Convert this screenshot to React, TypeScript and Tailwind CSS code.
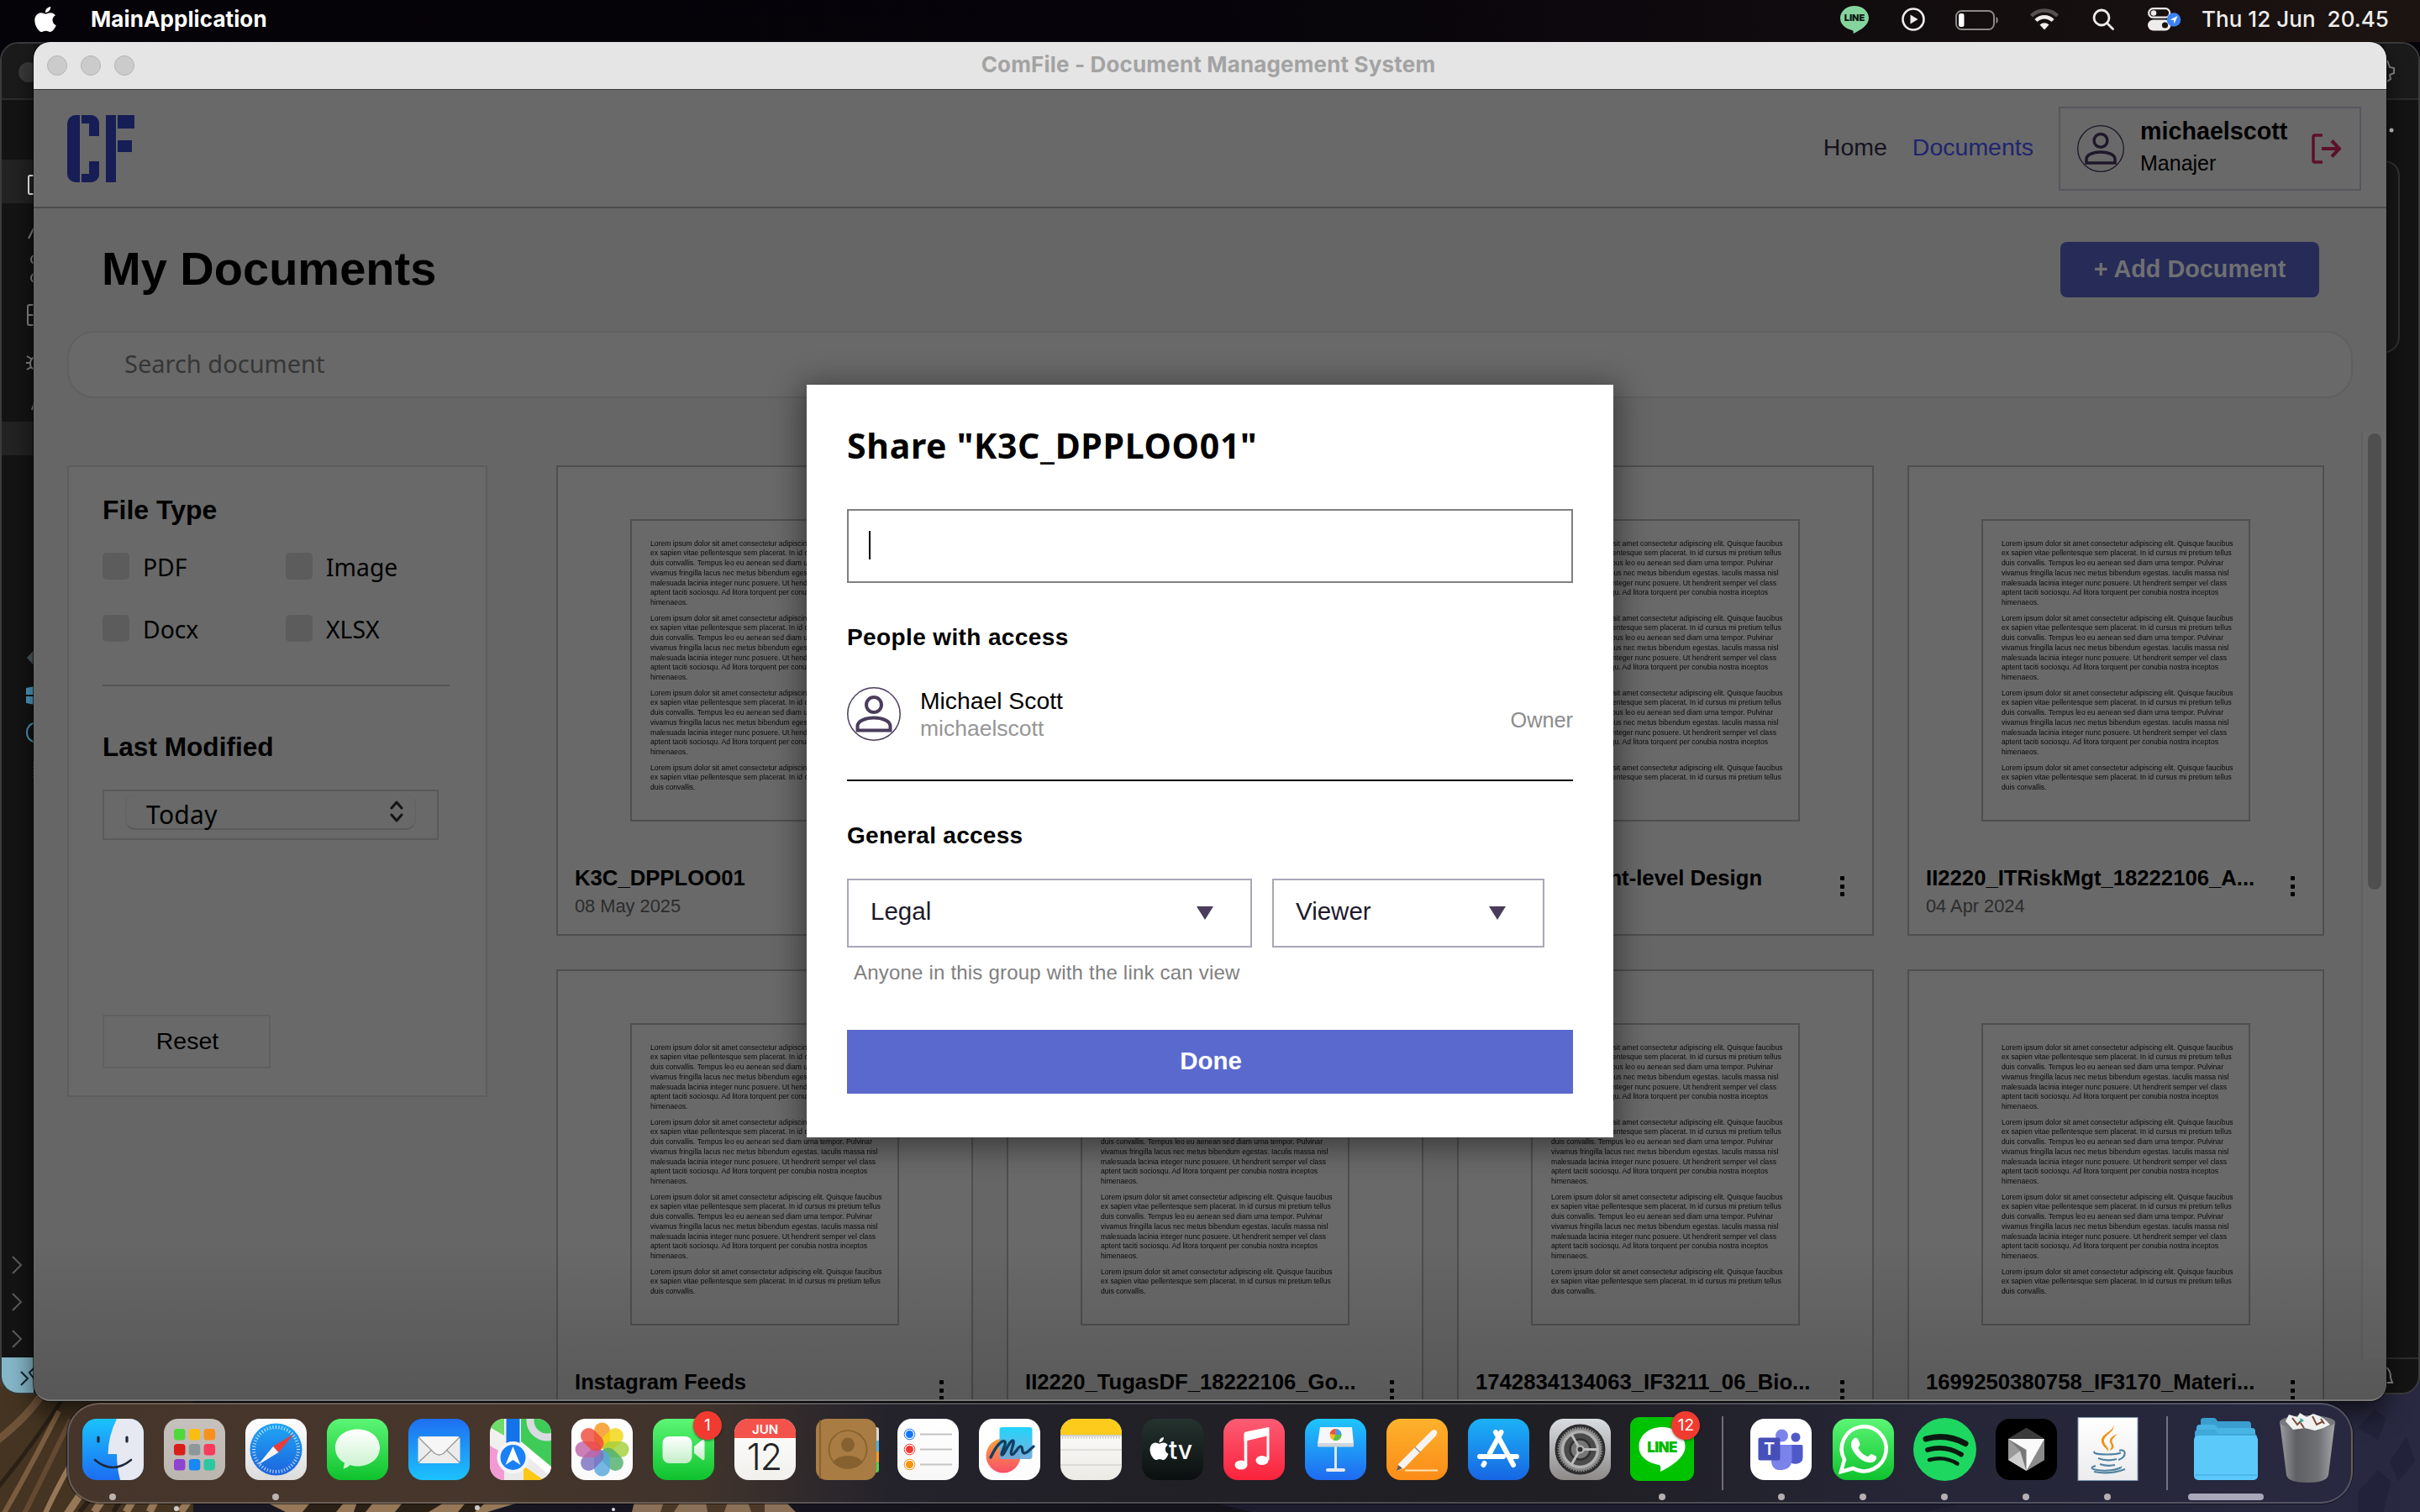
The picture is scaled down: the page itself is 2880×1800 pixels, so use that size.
import React from "react";

const LOREM = [
  "Lorem ipsum dolor sit amet consectetur adipiscing elit. Quisque faucibus",
  "ex sapien vitae pellentesque sem placerat. In id cursus mi pretium tellus",
  "duis convallis. Tempus leo eu aenean sed diam urna tempor. Pulvinar",
  "vivamus fringilla lacus nec metus bibendum egestas. Iaculis massa nisl",
  "malesuada lacinia integer nunc posuere. Ut hendrerit semper vel class",
  "aptent taciti sociosqu. Ad litora torquent per conubia nostra inceptos",
  "himenaeos.",
];
const LOREM_END = [LOREM[0], LOREM[1], "duis convallis."];

const DOCS = [
  { title: "K3C_DPPLOO01", date: "08 May 2025" },
  { title: "", date: "" },
  { title: "K3 Component-level Design", date: "" },
  { title: "II2220_ITRiskMgt_18222106_A...", date: "04 Apr 2024" },
  { title: "Instagram Feeds", date: "" },
  { title: "II2220_TugasDF_18222106_Go...", date: "" },
  { title: "1742834134063_IF3211_06_Bio...", date: "" },
  { title: "1699250380758_IF3170_Materi...", date: "" },
];

function Apple({ className, fill = "#fff" }: { className?: string; fill?: string }) {
  return (
    <svg viewBox="2 0 20 24" className={className} fill={fill} preserveAspectRatio="none">
      <path d="M12.15 6.9c-.95 0-2.42-1.08-3.96-1.04-2.04.03-3.91 1.18-4.96 3.01-2.12 3.68-.55 9.1 1.52 12.09 1.01 1.45 2.21 3.09 3.79 3.04 1.52-.07 2.09-.99 3.94-.99 1.83 0 2.35.99 3.96.95 1.64-.03 2.68-1.48 3.68-2.95 1.16-1.69 1.64-3.33 1.66-3.42-.04-.01-3.18-1.22-3.22-4.86-.03-3.04 2.48-4.49 2.6-4.56-1.43-2.09-3.62-2.32-4.39-2.38-2-.16-3.68 1.09-4.61 1.09zM15.53 3.83c.84-1.01 1.4-2.43 1.25-3.83-1.21.05-2.66.8-3.53 1.82-.78.9-1.45 2.34-1.27 3.71 1.34.1 2.71-.69 3.56-1.7" />
    </svg>
  );
}

function Avatar({ className, color }: { className: string; color: string }) {
  return (
    <svg viewBox="0 0 64 64" className={className} fill="none" stroke={color}>
      <circle cx="32" cy="32" r="31.2" strokeWidth="1.5" />
      <circle cx="32" cy="21" r="9" strokeWidth="4" />
      <path d="M12.500 51.500v-5c0-6.500 10-10 19.500-10s19.500 3.500 19.500 10v5z" strokeWidth="4" />
    </svg>
  );
}

function MenuBar() {
  return (
    <div className="flex h-[50px] w-full items-center bg-gradient-to-r from-[#050208] via-[#06040a] to-[#1c1411] font-['Inter'] text-[26px] leading-[50px]">
      <Apple className="-mt-[4px] ml-[41px] h-[30px] w-[26px]" />
      <span className="-mt-[4px] ml-[41px] font-bold tracking-[0.1px] text-white">MainApplication</span>
      <div className="-mt-[4px] ml-auto flex items-center">
        <svg viewBox="0 0 34 34" className="h-[34px] w-[34px]">
          <path d="M17 1C8 1 0 7 0 15.500 0 23 6 28 14 30c2 .6 2 2 1.500 4C24 30 34 24 34 15.500 34 7 26 1 17 1z" fill="#86d49d" />
          <text x="17" y="19" textAnchor="middle" fontSize="11" fontWeight="900" fontFamily="Inter" fill="#0d1a12">LINE</text>
        </svg>
        <svg viewBox="0 0 28 28" className="ml-[39px] h-[28px] w-[28px]">
          <circle cx="14" cy="14" r="12.500" fill="none" stroke="#efedec" strokeWidth="2.600" />
          <path d="M10.500 8.500v11l9-5.500z" fill="#efedec" />
        </svg>
        <svg viewBox="0 0 52 24" className="ml-[36px] mt-[2px] h-[24px] w-[52px]">
          <rect x="1" y="1" width="45" height="22" rx="6.500" fill="none" stroke="#8d8886" strokeWidth="2" />
          <rect x="4" y="4" width="6.500" height="16" rx="2.500" fill="#fff" />
          <path d="M48.500 8v8c3-1 3-7 0-8z" fill="#8d8886" />
        </svg>
        <svg viewBox="0 0 34 26" className="ml-[37px] h-[26px] w-[34px]">
          <path d="M1.500 9a22 22 0 0 1 31 0" fill="none" stroke="#57504e" strokeWidth="4.500" />
          <path d="M7 14.500a14 14 0 0 1 20 0" fill="none" stroke="#efedec" strokeWidth="4.500" />
          <path d="M17 25.500l-5.500-6a8 8 0 0 1 11 0z" fill="#efedec" />
        </svg>
        <svg viewBox="0 0 26 26" className="ml-[40px] h-[26px] w-[26px]" fill="none" stroke="#efedec" strokeWidth="2.800" strokeLinecap="round">
          <circle cx="11" cy="11" r="9" />
          <path d="M17.500 17.500l7 7" />
        </svg>
        <svg viewBox="0 0 40 28" className="ml-[40px] h-[28px] w-[40px]">
          <rect x="1.200" y="1.200" width="25" height="10.500" rx="5.250" fill="none" stroke="#efedec" strokeWidth="2.200" />
          <circle cx="7" cy="6.500" r="3.300" fill="#efedec" />
          <rect x="0" y="14.500" width="27.500" height="13" rx="6.500" fill="#efedec" />
          <circle cx="20.500" cy="21" r="3.600" fill="#171110" />
          <circle cx="31" cy="14.500" r="8.300" fill="#3a82f7" />
          <path d="M35.500 10l-9 4.500 4.500.5.500 4.500z" fill="#fff" />
        </svg>
        <span className="ml-[24px] mr-[37px] whitespace-pre font-medium tracking-[0.05px] text-[#efedec]">Thu 12 Jun  20.45</span>
      </div>
    </div>
  );
}

/* Stencil monogram */
function Logo() {
  return (
    <div className="flex h-[80px] w-[80px]">
      <div className="h-full w-[15px] rounded-l-[10px] bg-[#171e55]" />
      <div className="ml-[2px] flex h-full w-[21px] flex-col justify-between">
        <div className="h-[25px] rounded-tr-[10px] border-r-[12px] border-t-[10px] border-[#171e55]" />
        <div className="h-[25px] rounded-br-[10px] border-b-[10px] border-r-[12px] border-[#171e55]" />
      </div>
      <div className="ml-[8px] h-full w-[12px] bg-[#171e55]" />
      <div className="ml-[2px] flex flex-col">
        <div className="h-[16px] w-[20px] bg-[#171e55]" />
        <div className="mt-[14px] h-[14px] w-[17px] bg-[#171e55]" />
      </div>
    </div>
  );
}

function Header() {
  return (
    <div className="flex h-[141px] items-center border-b-2 border-[#4b4b4b] bg-[#696969] pl-[40px] pr-[30px]">
      <Logo />
      <div className="ml-auto flex gap-[30px] pb-[4px] text-[28.500px] leading-[32px]">
        <span className="text-[#16131f]">Home</span>
        <span className="text-[#1f2570]">Documents</span>
      </div>
      <div className="ml-[30px] flex h-[100px] w-[360px] items-center border-2 border-[#56565f] pl-[20px] pr-[22px]">
        <Avatar className="h-[56px] w-[56px]" color="#1f1829" />
        <div className="ml-[19px] flex h-full flex-col pt-[11px] text-black">
          <span className="text-[28.700px] font-bold leading-[32px]">michaelscott</span>
          <span className="mt-[8px] text-[25px] leading-[28px]">Manajer</span>
        </div>
        <svg viewBox="0 0 35 36" className="ml-auto h-[36px] w-[35px]" fill="none" stroke="#5c1029" strokeWidth="4">
          <path d="M13 2H4q-2 0-2 2v28q0 2 2 2h9" strokeWidth="3.500" />
          <path d="M12 18h20M24 8.500L33 18l-9 9.500" />
        </svg>
      </div>
    </div>
  );
}

function Check({ label }: { label: string }) {
  return (
    <div className="flex h-[32px] w-[218px] items-center">
      <div className="h-[32px] w-[32px] rounded-[5px] bg-[#5c5c5c]" />
      <span className="ml-[16px] mt-[2px] font-['Noto_Sans'] text-[28.300px] leading-[32px] text-black">{label}</span>
    </div>
  );
}

function Sidebar() {
  return (
    <div className="flex h-[752px] w-[500px] shrink-0 flex-col border-2 border-[#5d5d5d] bg-[#696969] pl-[40px] text-black">
      <div className="mt-[33px] text-[32px] font-bold leading-[36px]">File Type</div>
      <div className="mt-[33px] flex flex-wrap gap-y-[42px]">
        <Check label="PDF" />
        <Check label="Image" />
        <Check label="Docx" />
        <Check label="XLSX" />
      </div>
      <div className="mt-[51px] h-[2px] w-[413px] bg-[#555]" />
      <div className="mt-[54px] text-[31.600px] font-bold leading-[36px]">Last Modified</div>
      <div className="mt-[33px] h-[60px] w-[400px] border-2 border-[#5a5a5a] pl-[25px] pt-[4px]">
        <div className="flex h-[42px] w-[346px] items-center rounded-[12px] border-x border-b-2 border-x-[#626262] border-b-[#5a5a5a] pl-[24px] pr-[14px]">
          <span className="mt-[8px] font-['Noto_Sans'] text-[30px] leading-[36px] tracking-[0.3px]">Today</span>
          <svg viewBox="0 0 16 26" className="ml-auto h-[26px] w-[16px]" fill="none" stroke="#151515" strokeWidth="3" strokeLinecap="round" strokeLinejoin="round">
            <path d="M2 9l6-7 6 7M2 17l6 7 6-7" />
          </svg>
        </div>
      </div>
      <div className="mt-[208px] h-[64px] w-[200px] border-2 border-[#606060] pl-[2px] pt-[13px] text-center text-[28.500px] leading-[32px]">Reset</div>
    </div>
  );
}

function Paragraph({ lines }: { lines: string[] }) {
  return (
    <div className="mb-[6.700px]">
      {lines.map((l) => (
        <div key={l} className="whitespace-nowrap">{l}</div>
      ))}
    </div>
  );
}

function Card({ title, date }: { title: string; date: string }) {
  return (
    <div className="h-[560px] w-[496px] border-2 border-[#4f4f4f] bg-[#696969]">
      <div className="ml-[86px] mt-[62px] h-[360px] w-[320px] overflow-hidden border-2 border-[#4f4f4f] pl-[22px] pt-[21.500px] text-[8.600px] leading-[11.770px] text-[#080808] blur-[0.4px]">
        <Paragraph lines={LOREM} />
        <Paragraph lines={LOREM} />
        <Paragraph lines={LOREM} />
        <Paragraph lines={LOREM_END} />
      </div>
      <div className="mt-[52px] flex pl-[20px] pr-[33px]">
        <div>
          <div className="h-[30px] whitespace-nowrap text-[25.700px] font-bold leading-[30px] text-black">{title}</div>
          <div className="mt-[6px] h-[26px] text-[21.800px] leading-[26px] text-[#2c2c2c]">{date}</div>
        </div>
        <div className="ml-auto mt-[13px] flex h-[24px] w-[5px] flex-col justify-between">
          <div className="h-[5px] w-[5px] rounded-[1px] bg-black" />
          <div className="h-[5px] w-[5px] rounded-[1px] bg-black" />
          <div className="h-[5px] w-[5px] rounded-[1px] bg-black" />
        </div>
      </div>
    </div>
  );
}

function Triangle() {
  return (
    <svg viewBox="0 0 20 16" className="h-[16px] w-[20px]" fill="#4a3d5c">
      <path d="M0 0h20L10 16z" />
    </svg>
  );
}

function ShareDialog() {
  return (
    <div className="absolute left-[920px] top-[408px] flex h-[896px] w-[960px] flex-col bg-white px-[48px] pt-[45px] text-black shadow-[0_6px_34px_6px_rgba(0,0,0,0.42)]">
      <div className="h-[55px] whitespace-nowrap font-['Noto_Sans'] text-[41px] font-bold leading-[54px] tracking-[0.7px]">Share "K3C_DPPLOO01"</div>
      <div className="mt-[48px] h-[88px] border-2 border-[#808080] pl-[24px] pt-[24px]">
        <div className="h-[34px] w-[2px] bg-black" />
      </div>
      <div className="mt-[49px] text-[28px] font-bold leading-[32px] tracking-[0.380px]">People with access</div>
      <div className="mt-[43px] flex h-[64px]">
        <Avatar className="h-[64px] w-[64px]" color="#4a3d5c" />
        <div className="ml-[23px] flex flex-col">
          <span className="text-[28.300px] leading-[32px]">Michael Scott</span>
          <span className="text-[26.500px] leading-[34px] text-[#969696]">michaelscott</span>
        </div>
        <span className="ml-auto mt-[22px] text-[25.300px] leading-[34px] text-[#8c8c8c]">Owner</span>
      </div>
      <div className="mt-[46px] h-[2px] bg-black" />
      <div className="mt-[49px] text-[28px] font-bold leading-[32px] tracking-[0.280px]">General access</div>
      <div className="mt-[35px] flex h-[82px] gap-[24px] text-[29.500px] text-[#1d1a2b]">
        <div className="flex w-[482px] items-center justify-between border-2 border-[#a8a7b9] pl-[26px] pr-[44px]">
          <span className="-mt-[3px]">Legal</span>
          <Triangle />
        </div>
        <div className="flex w-[324px] items-center justify-between border-2 border-[#a8a7b9] pl-[26px] pr-[44px]">
          <span className="-mt-[3px]">Viewer</span>
          <Triangle />
        </div>
      </div>
      <div className="mt-[16px] pl-[8px] text-[24px] leading-[28px] tracking-[0.200px] text-[#808080]">Anyone in this group with the link can view</div>
      <div className="mt-[54px] h-[76px] bg-[#5a69ce] pl-[2px] pt-[19px] text-center text-[29.500px] font-bold leading-[36px] text-white">Done</div>
    </div>
  );
}

function AppWindow() {
  return (
    <div className="absolute left-[40px] top-[50px] h-[1618px] w-[2800px] overflow-hidden rounded-[20px] bg-[#666] shadow-[0_0_0_1px_rgba(0,0,0,0.6),0_14px_30px_rgba(0,0,0,0.6)]">
      <div className="flex h-[57px] items-center border-b border-[#3c3c3c] bg-[#e5e5e5] pl-[16px]">
        <div className="flex gap-[16px]">
          <div className="h-[24px] w-[24px] rounded-full border border-[#b4b4b4] bg-[#cbcbcb]" />
          <div className="h-[24px] w-[24px] rounded-full border border-[#b4b4b4] bg-[#cbcbcb]" />
          <div className="h-[24px] w-[24px] rounded-full border border-[#b4b4b4] bg-[#cbcbcb]" />
        </div>
        <div className="-mt-[3px] mr-[124px] flex-1 text-center font-['Inter'] text-[26px] font-bold tracking-[0.160px] text-[#a3a3a3]">ComFile - Document Management System</div>
      </div>
      <Header />
      <div className="mt-[40px] flex h-[66px] w-full items-center justify-between pl-[81px] pr-[80px]">
        <div className="-mt-[2px] text-[56px] font-bold leading-[66px] text-black">My Documents</div>
        <div className="h-[66px] w-[308px] rounded-[8px] bg-[#262b57] text-center text-[28.800px] font-bold leading-[64px] text-[#6f7072]">+ Add Document</div>
      </div>
      <div className="mx-[40px] mt-[40px] flex h-[80px] items-center rounded-[32px] border-2 border-[#606060] bg-[#696969] pl-[66px] font-['Noto_Sans'] text-[29px] text-[#363636]">
        <span className="-mt-[2px]">Search document</span>
      </div>
      <div className="mt-[40px] flex h-[1104px]">
        <div className="ml-[40px] mt-[40px]">
          <Sidebar />
        </div>
        <div className="ml-[82px] mt-[40px] grid w-[2104px] shrink-0 grid-cols-4 content-start gap-[40px]">
          {DOCS.map((d, i) => (
            <Card key={i} title={d.title} date={d.date} />
          ))}
        </div>
        <div className="ml-auto w-[30px] border-l-2 border-[#606060] bg-[#686868] pl-[6px] pt-[2px]">
          <div className="h-[543px] w-[16px] rounded-full bg-[#4f4f4f]" />
        </div>
      </div>
      <div className="absolute inset-x-0 bottom-0 h-[190px] rounded-b-[20px] border-b-2 border-[#777] bg-gradient-to-t from-black/15 to-transparent" />
      <ShareDialog />
    </div>
  );
}

/* Code editor that shows at both sides of the main window */
function EditorWindow() {
  return (
    <div className="absolute left-0 top-[50px] flex h-[1610px] w-[2880px] justify-between overflow-hidden rounded-[22px] border-2 border-[#3b3b3b] bg-[#141414]">
      <svg viewBox="0 50 40 1610" className="-ml-[2px] -mt-[2px] h-[1610px] w-[40px]" fill="none" stroke="#8a8a8a" strokeWidth="2">
        <rect x="2" y="50" width="40" height="68" fill="#1b1b1b" stroke="none" />
        <path d="M2 118h40" stroke="#2e2e2e" />
        <circle cx="34" cy="86" r="12" fill="#3a3a3a" stroke="none" />
        <rect x="2" y="190" width="40" height="52" fill="#232323" stroke="none" />
        <rect x="34" y="209" width="20" height="22" rx="2" stroke="#fff" />
        <path d="M34 284l7-14" />
        <circle cx="42" cy="309" r="5" />
        <circle cx="42" cy="331" r="5" />
        <path d="M42 363h-7q-2 0-2 2v20q0 2 2 2h7M33 375h8" />
        <path d="M32 424l5 3M31 432h6M32 440l5-3M41 425q-5 2-5 8t5 6" />
        <path d="M38 488l3-9" />
        <rect x="2" y="502" width="40" height="40" fill="#232323" stroke="none" />
        <path d="M42 772l-10 11 10 11z" fill="#4f5a60" stroke="none" />
        <path d="M31 819l11-2v10H31zM31 829h11v10l-11-2z" fill="#4f9fc4" stroke="none" />
        <path d="M42 860q-10 3-10 12t10 12" stroke="#4f9fc4" />
        <path d="M40 908v18" strokeDasharray="2 2" stroke="#666" />
        <path d="M15 1496l10 10-10 10M15 1540l10 10-10 10M15 1584l10 10-10 10" stroke="#5e5e5e" />
        <path d="M2 1616h40v44H2z" fill="#86b7c9" stroke="none" />
        <path d="M25 1633l8 8-8 8M42 1627l-7 7 6 8" stroke="#10242c" />
      </svg>
      <svg viewBox="2838 50 40 1610" className="-mt-[2px] h-[1610px] w-[40px]" fill="none" stroke="#8a8a8a" strokeWidth="2">
        <rect x="2838" y="50" width="40" height="68" fill="#1b1b1b" stroke="none" />
        <path d="M2838 118h40M2838 1617h40" stroke="#2e2e2e" />
        <path d="M2841 72l3 8 5 1v6l-5 2 1 5-4 3" />
        <circle cx="2846" cy="155" r="2.500" fill="#ccc" stroke="none" />
        <path d="M2838 192q17 2 17 18v190q0 16-17 20" stroke="#333" fill="#181818" />
        <path d="M2840 1628q5 3 5 12l2 6h-7" />
      </svg>
    </div>
  );
}

function Wallpaper() {
  return (
    <svg viewBox="0 0 2880 1800" className="absolute inset-0 h-[1800px] w-[2880px]">
      <rect width="2880" height="1800" fill="#05040a" />
      <defs>
        <linearGradient id="night" x1="0" x2="1">
          <stop offset="0" stopColor="#1a1824" />
          <stop offset=".5" stopColor="#14131b" />
          <stop offset="1" stopColor="#292a42" />
        </linearGradient>
      </defs>
      <rect y="1600" width="2880" height="200" fill="url(#night)" />
      <path d="M0 1640h130l-40 160H0z" fill="#4e3b27" />
      <path d="M0 1650h230v150H0z" fill="#453421" />
      <g fill="none" strokeLinecap="butt">
        <path d="M-10 1720Q30 1690 50 1660" stroke="#6f5439" strokeWidth="9" />
        <path d="M-10 1780Q40 1720 78 1660" stroke="#2b2016" strokeWidth="5" />
        <path d="M0 1810Q40 1740 70 1680" stroke="#7a5d40" strokeWidth="6" />
        <path d="M25 1810Q55 1750 84 1690" stroke="#634a31" strokeWidth="6" />
        <path d="M50 1810Q68 1770 86 1740" stroke="#967858" strokeWidth="6" />
        <path d="M75 1810l20-30M112 1800l14-20M150 1800l12-20M178 1800l10-20M215 1800l14-20" stroke="#967858" strokeWidth="9" />
        <path d="M95 1800l16-20M135 1800l12-20" stroke="#2b2016" strokeWidth="6" />
      </g>
      <path d="M316 1788h304l-40 12H340z" fill="#967858" />
      <path d="M370 1788h40l-10 12h-40zM425 1788h20l-10 12h-14zM480 1788h50l-20 12h-40zM555 1788h24l-14 12h-20z" fill="#2b2016" />
      <path d="M755 1788h180l12 12H752z" fill="#8a7056" />
      <path d="M790 1788h20l-8 12h-16zM840 1788h26l-4 12h-20zM890 1788h20v12h-16z" fill="#4c3826" />
      <path d="M1440 1788h900l-50 12h-800z" fill="#1c1c2e" />
      <path d="M2806 1700l20-22 14 10-10 26zM2844 1740l20-30 10 30-20 24zM2806 1776l24-26 16 14-10 36h-30z" fill="#22223a" />
      <circle cx="210" cy="1796" r="3" fill="#ccc" />
      <circle cx="730" cy="1797" r="2" fill="#ddd" />
      <circle cx="568" cy="1795" r="3" fill="#ccc" />
    </svg>
  );
}

function Grad({ id, a, b }: { id: string; a: string; b: string }) {
  return (
    <defs>
      <linearGradient id={id} x1="0" y1="0" x2="0" y2="1">
        <stop offset="0" stopColor={a} />
        <stop offset="1" stopColor={b} />
      </linearGradient>
    </defs>
  );
}

function Tile({ id, a, b, children }: { id: string; a: string; b: string; children?: React.ReactNode }) {
  return (
    <svg viewBox="0 0 73 73" className="h-[73px] w-[73px] overflow-visible">
      <Grad id={id} a={a} b={b} />
      <clipPath id={id + "-clip"}>
        <rect width="73" height="73" rx="17" />
      </clipPath>
      <rect width="73" height="73" rx="17" fill={`url(#${id})`} />
      <g clipPath={`url(#${id}-clip)`}>{children}</g>
    </svg>
  );
}

const PETALS = ["#f7941d", "#f2d50f", "#a5cf3a", "#4fb06d", "#58a6dc", "#7a6fc0", "#c065a8", "#ef4b3c"];
const TICKS = Array.from({ length: 48 }, (_, i) => i * 7.5);
const PAD = ["#4fd93c", "#fbbd12", "#f7911b", "#d81f1a", "#8e979c", "#fb3b5c", "#8f43cf", "#1689f5", "#2cc7a0"];

const ICONS: { name: string; dot?: boolean; badge?: string; art: React.ReactNode }[] = [
  {
    name: "finder",
    dot: true,
    art: (
      <Tile id="fi" a="#1ac3fd" b="#1d6df2">
        <path d="M41 0Q31 20 30.500 42H41q0 16 4 31h28V0z" fill="#e6e9f1" />
        <path d="M19 22v5M53 22v5" stroke="#1d2a3c" strokeWidth="3.200" strokeLinecap="round" />
        <path d="M15 49q21 18 43 0" fill="none" stroke="#1d2a3c" strokeWidth="2.600" strokeLinecap="round" />
      </Tile>
    ),
  },
  {
    name: "launchpad",
    art: (
      <Tile id="lp" a="#c6c1bd" b="#bcb6b1">
        {PAD.map((c, i) => (
          <rect key={i} x={12 + (i % 3) * 17.8} y={12 + Math.floor(i / 3) * 18} width="13.500" height="13.500" rx="3.500" fill={c} />
        ))}
      </Tile>
    ),
  },
  {
    name: "safari",
    dot: true,
    art: (
      <Tile id="sa" a="#ffffff" b="#dcdcdc">
        <Grad id="sab" a="#1fa7f5" b="#1d63dd" />
        <circle cx="36.500" cy="36.500" r="31" fill="url(#sab)" />
        {TICKS.map((t) => (
          <path key={t} d="M36.500 8v4" stroke="#fff" strokeOpacity=".8" strokeWidth="1" transform={`rotate(${t} 36.500 36.500)`} />
        ))}
        <path d="M58 18L33 33l6.500 7z" fill="#ee3b35" />
        <path d="M15 55l18-22 6.500 7z" fill="#f4f4f4" />
      </Tile>
    ),
  },
  {
    name: "messages",
    art: (
      <Tile id="me" a="#5bf675" b="#0fc22d">
        <Grad id="meb" a="#ffffff" b="#c9f3cd" />
        <path d="M36.500 12.500C21 12.500 10 22 10 34.500c0 8 4 14 11 18-.5 3-1 5-1.500 7 4-1 6-2.500 8-4.500 3 1 6 1.500 9 1.500C52 56.500 63 47 63 34.500S52 12.500 36.500 12.500z" fill="url(#meb)" />
      </Tile>
    ),
  },
  {
    name: "mail",
    art: (
      <Tile id="ma" a="#1e6ff1" b="#1cc2fd">
        <rect x="11.500" y="21" width="50" height="32" rx="3.500" fill="#ececec" />
        <path d="M12 52l18-17M61 52L43 35" stroke="#9a9a9a" strokeWidth="1.400" />
        <path d="M12 22l19 19q5.500 4 11 0l19-19" fill="#f6f6f6" stroke="#9a9a9a" strokeWidth="1.400" />
      </Tile>
    ),
  },
  {
    name: "maps",
    art: (
      <Tile id="mp" a="#f3f4f2" b="#e9e9e9">
        <path d="M0 0h17v20L0 10z" fill="#6fdb68" />
        <path d="M37 0h36v58L37 30z" fill="#3fcb58" />
        <circle cx="68" cy="2" r="20" fill="none" stroke="#d9dbe0" strokeWidth="9" />
        <path d="M0 32l17 10v31H0z" fill="#f39ad4" />
        <path d="M40 56l24 17H40z" fill="#fdc813" />
        <path d="M37 27l36 30v12L37 38z" fill="#fff" />
        <rect x="19.500" width="16" height="46" fill="#1373ea" />
        <circle cx="27.500" cy="46" r="17" fill="#1b80f5" stroke="#f4f6fa" strokeWidth="4" />
        <path d="M27.500 33l9 22-9-6-9 6z" fill="#fff" />
      </Tile>
    ),
  },
  {
    name: "photos",
    art: (
      <Tile id="ph" a="#ffffff" b="#fafafa">
        {PETALS.map((c, i) => (
          <rect key={c} x="27" y="4.500" width="19" height="31" rx="9.500" fill={c} fillOpacity=".82" transform={`rotate(${i * 45} 36.500 36.500)`} />
        ))}
      </Tile>
    ),
  },
  {
    name: "facetime",
    badge: "1",
    art: (
      <Tile id="fa" a="#5bf675" b="#0fc22d">
        <Grad id="fab" a="#ffffff" b="#c2eec6" />
        <rect x="11.500" y="21" width="35" height="32" rx="8" fill="url(#fab)" />
        <path d="M49 33l10-8q2.500-1 2.500 2v20q0 3-2.500 2l-10-8z" fill="url(#fab)" />
      </Tile>
    ),
  },
  {
    name: "calendar",
    art: (
      <Tile id="ca" a="#ffffff" b="#f1f0ec">
        <rect width="73" height="23" fill="#f4534b" />
        <text x="36.500" y="17.500" textAnchor="middle" fontSize="15" fontWeight="600" fontFamily="Inter" fill="#fff">JUN</text>
        <text x="35.500" y="61" textAnchor="middle" fontSize="43" fontWeight="300" fontFamily="Inter" letterSpacing="-1" fill="#222">12</text>
      </Tile>
    ),
  },
  {
    name: "contacts",
    art: (
      <svg viewBox="0 0 76 73" className="ml-[4px] h-[73px] w-[76px]">
        <rect x="64" y="10" width="11" height="18" rx="3" fill="#d8d8d4" />
        <rect x="64" y="26" width="11" height="14" fill="#4fb3e8" />
        <rect x="64" y="39" width="11" height="13" fill="#f59a23" />
        <rect x="64" y="51" width="11" height="13" rx="3" fill="#55cf5c" />
        <rect width="72" height="73" rx="13" fill="#a97c43" />
        <path d="M5 2v69" stroke="#8a6230" strokeWidth="2" />
        <circle cx="38" cy="36.500" r="22.500" fill="none" stroke="#86612f" strokeWidth="1.600" />
        <ellipse cx="38" cy="31" rx="8" ry="8.500" fill="#86612f" />
        <path d="M20 52q5-8 18-8t18 8q-8 7.500-18 7.500t-18-7.500z" fill="#86612f" />
      </svg>
    ),
  },
  {
    name: "reminders",
    art: (
      <Tile id="re" a="#ffffff" b="#f7f7f7">
        {["#1677f6", "#ef3a32", "#f39413"].map((c, i) => (
          <g key={c}>
            <circle cx="14.500" cy={18.500 + i * 18} r="4.500" fill={c} />
            <circle cx="14.500" cy={18.500 + i * 18} r="6.300" fill="none" stroke={c} strokeWidth="1" />
            <path d={`M27 ${18.5 + i * 18}h38`} stroke="#c3c3c3" strokeWidth="1.800" />
          </g>
        ))}
      </Tile>
    ),
  },
  {
    name: "freeform",
    art: (
      <Tile id="fr" a="#ffffff" b="#fdfdfd">
        <Grad id="frb" a="#fba33a" b="#f84f69" />
        <circle cx="29" cy="44" r="20.500" fill="url(#frb)" />
        <Grad id="frc" a="#12d0fb" b="#6fa9dc" />
        <rect x="24.500" y="10" width="39" height="38" rx="3" fill="url(#frc)" fillOpacity=".93" />
        <path d="M14 46C20 33 27 25 30.500 27S25 42 27.500 43 36 26 40 26s-4 15-1 16.500S47 32 50 33s0 8 4 8 7-5 11-8" fill="none" stroke="#123e63" strokeWidth="3.400" strokeLinecap="round" />
      </Tile>
    ),
  },
  {
    name: "notes",
    art: (
      <Tile id="no" a="#ffffff" b="#eceae5">
        <rect width="73" height="19" fill="#fdcb1b" />
        <path d="M0 20h73" stroke="#a9a59b" strokeWidth="1" />
        <path d="M2 22.500h70" stroke="#b9b6ae" strokeWidth="2" strokeDasharray="1.200 2" />
        <path d="M0 37h73M0 55h73" stroke="#c9c7c1" strokeWidth="1.200" />
      </Tile>
    ),
  },
  {
    name: "tv",
    art: (
      <svg viewBox="0 0 73 73" className="h-[73px] w-[73px]">
        <Grad id="tv" a="#25332f" b="#0a0f0f" />
        <rect width="73" height="73" rx="17" fill="url(#tv)" />
        <svg x="9" y="22" width="23" height="27" viewBox="2 0 20 24">
          <path fill="#fff" d="M12.150 6.900c-.95 0-2.420-1.080-3.960-1.040-2.040.03-3.910 1.180-4.960 3.010-2.120 3.680-.55 9.100 1.520 12.090 1.010 1.450 2.210 3.090 3.790 3.040 1.520-.07 2.090-.99 3.940-.99 1.830 0 2.350.99 3.960.95 1.640-.03 2.680-1.480 3.680-2.950 1.160-1.690 1.640-3.330 1.660-3.420-.04-.01-3.180-1.220-3.220-4.860-.03-3.040 2.480-4.490 2.600-4.560-1.430-2.090-3.620-2.320-4.390-2.380-2-.16-3.680 1.090-4.610 1.090zM15.530 3.830c.84-1.010 1.400-2.430 1.250-3.830-1.210.05-2.660.8-3.530 1.820-.78.9-1.450 2.340-1.270 3.710 1.340.1 2.710-.69 3.560-1.700" />
        </svg>
        <text x="32" y="48" fontSize="30" fontWeight="500" fontFamily="Inter" fill="#fff">tv</text>
      </svg>
    ),
  },
  {
    name: "music",
    art: (
      <Tile id="mu" a="#fc5c74" b="#fa233b">
        <path d="M26 18.500l27-6.500v37" fill="none" stroke="#fff" strokeWidth="3" />
        <path d="M24.500 18q0-2 2-2.500l25-5q2-.4 2 1.500v8l-27 6.500H24.500z" fill="#fff" />
        <path d="M26.500 18v36" stroke="#fff" strokeWidth="3.600" />
        <ellipse cx="21" cy="55" rx="7.500" ry="5.600" fill="#fff" />
        <ellipse cx="46" cy="49.500" rx="7.500" ry="5.600" fill="#fff" />
      </Tile>
    ),
  },
  {
    name: "keynote",
    art: (
      <Tile id="ke" a="#1fc5fd" b="#1f6af0">
        <rect x="35" y="32" width="3" height="29" fill="#dfe6ee" />
        <rect x="25" y="59" width="23" height="4" rx="2" fill="#e3e8ee" />
        <path d="M18 10h38l2 20v3H15v-3z" fill="#f5f7f8" />
        <path d="M15 29h43v3q0 1.500-2 1.500H17q-2 0-2-1.500z" fill="#cfd5db" />
        <circle cx="36.500" cy="19" r="7" fill="#fdb82c" />
        <path d="M36.500 19V12a7 7 0 0 1 7 7z" fill="#3a9df0" />
        <path d="M36.500 19h7a7 7 0 0 1-10 6.300z" fill="#55c24c" />
        <path d="M36.500 19l-7-1a7 7 0 0 1 7-6z" fill="#e35545" />
      </Tile>
    ),
  },
  {
    name: "pages",
    art: (
      <Tile id="pa" a="#fdb22c" b="#fb8b18">
        <path d="M22 61.500h39" stroke="#fde2ba" strokeWidth="2.200" />
        <path d="M14 54L53 15q4-4 7 0 1 2-1 5L21 59l-8 3z" fill="#f6f4f2" />
        <path d="M34 34l6 6" stroke="#8d8780" strokeWidth="1.300" />
        <path d="M14 55l-2 7 7-3z" fill="#6b5a45" />
      </Tile>
    ),
  },
  {
    name: "appstore",
    art: (
      <Tile id="as" a="#1bb2f6" b="#1766e4">
        <g stroke="#fff" strokeWidth="6" strokeLinecap="round">
          <path d="M39.500 16L26 41M33 16l21 39M14 45h28M51 45h7M19.500 53l-1 2" />
        </g>
      </Tile>
    ),
  },
  {
    name: "settings",
    art: (
      <Tile id="se" a="#d8dde3" b="#8d8a88">
        <circle cx="36.500" cy="36.500" r="28.500" fill="#8b8b8b" stroke="#2d2d2d" strokeWidth="3" />
        <circle cx="36.500" cy="36.500" r="27" fill="none" stroke="#2d2d2d" strokeWidth="3.500" strokeDasharray="1.600 1.600" />
        <circle cx="36.500" cy="36.500" r="21" fill="#4b4b4b" stroke="#b0b0b0" strokeWidth="3.500" />
        <circle cx="36.500" cy="36.500" r="12" fill="#777" stroke="#2f2f2f" strokeWidth="2.500" />
        <path d="M36.500 36.500h21M36.500 36.500L26 18.300M36.500 36.500L26 54.700" stroke="#bdbdbd" strokeWidth="3" />
        <circle cx="36.500" cy="36.500" r="4" fill="#333" stroke="#bbb" strokeWidth="2" />
      </Tile>
    ),
  },
  {
    name: "line",
    dot: true,
    badge: "12",
    art: (
      <svg viewBox="0 0 76 76" className="h-[76px] w-[76px]">
        <rect width="76" height="76" rx="11" fill="#00c300" />
        <path d="M38 12C22 12 10.500 22 10.500 35c0 12 10 19.500 24 22 2 .6 2 4 1.500 8C50 58 65.500 48 65.500 35 65.500 22 54 12 38 12z" fill="#fff" />
        <text x="38" y="41.500" textAnchor="middle" fontSize="17" fontWeight="900" fontFamily="Inter" letterSpacing="-.6" fill="#00b900">LINE</text>
      </svg>
    ),
  },
];

const ICONS_RIGHT: typeof ICONS = [
  {
    name: "teams",
    dot: true,
    art: (
      <Tile id="te" a="#ffffff" b="#ffffff">
        <circle cx="37.500" cy="20" r="7.500" fill="#7b83eb" />
        <circle cx="54" cy="22" r="5.500" fill="#5059c9" />
        <path d="M47 31h14q1.500 0 1.500 2v13q0 6-6.500 7.500T47 50z" fill="#5059c9" />
        <path d="M25 31h23q1.500 0 1.500 2v15q0 12-12 13T25 50z" fill="#7b83eb" />
        <rect x="9.500" y="22.500" width="26" height="27" rx="2" fill="#464eb8" />
        <text x="22.500" y="43" textAnchor="middle" fontSize="20" fontWeight="600" fontFamily="Inter" fill="#fff">T</text>
      </Tile>
    ),
  },
  {
    name: "whatsapp",
    dot: true,
    art: (
      <Tile id="wa" a="#5bf675" b="#0fc22d">
        <path d="M10 64l4-14.500A26.500 26.500 0 1 1 24.500 60z" fill="none" stroke="#fff" strokeWidth="4.500" transform="translate(0 -1)" />
        <path d="M26 23c2-1 4 0 5 3l1.500 4c.5 1.500-2 3.500-2 5 3 5 6 8 11 10 2 0 3-3.500 5-3l5 2.500c1.500 1 .5 4-1 5.500-3 3-8 2.500-12 1C31 48 23 39 22 32c-.4-4 1-7 4-9z" fill="#fff" />
      </Tile>
    ),
  },
  {
    name: "spotify",
    dot: true,
    art: (
      <svg viewBox="0 0 75 75" className="h-[75px] w-[75px]">
        <circle cx="37.500" cy="37.500" r="37.500" fill="#1ed760" />
        <g fill="none" stroke="#0b1a10" strokeLinecap="round">
          <path d="M15 25q24-7 47 5.500" strokeWidth="7" />
          <path d="M17 38q21-6 40 5.500" strokeWidth="5.800" />
          <path d="M19 50q18-5 33.500 4.500" strokeWidth="4.600" />
        </g>
      </svg>
    ),
  },
  {
    name: "cursor",
    dot: true,
    art: (
      <Tile id="cu" a="#000000" b="#000000">
        <path d="M36.500 11L15 24v25l21.500 13L58 49V24z" fill="#777" />
        <path d="M36.500 11L15 24h43z" fill="#3b3b3b" />
        <path d="M15 24l14 14-14 11z" fill="#999" />
        <path d="M15 49l14-11 7.500 24z" fill="#cfcfcf" />
        <path d="M58 24v25L36.500 62z" fill="#8a8a8a" />
        <path d="M15 24h43L36.500 62V37z" fill="#fafafa" />
      </Tile>
    ),
  },
  {
    name: "java",
    dot: true,
    art: (
      <svg viewBox="0 0 73 76" className="h-[76px] w-[73px]">
        <Grad id="ja" a="#ffffff" b="#ececee" />
        <rect x="1" y=".5" width="71" height="75" fill="url(#ja)" stroke="#7d96b4" strokeWidth="1" />
        <path d="M43 9c3 9-12 12-11 20 .6 5 6 6 5 12-3-5-9-8-8-14 1-8 15-10 14-18z" fill="#f29111" />
        <path d="M48 20c-8 3-11 7-8 12 2 3 0 5-1 8 6-3 5-6 3-9-2-4 2-7 6-11z" fill="#f29111" />
        <g fill="none" stroke="#5382a1" strokeWidth="2.200">
          <path d="M21 41q-4 3 14 3.500 12 0 17-2" />
          <path d="M50 40c8-3 10 7-1 11" />
          <path d="M25 49q10 4 22 1M27 56q9 3 18 1" />
          <path d="M22 58c-14 4 8 7 20 5s10-4 10-4M20 65q18 4 37-3" />
        </g>
      </svg>
    ),
  },
];

function DockItem({ art, dot, badge }: { art: React.ReactNode; dot?: boolean; badge?: string }) {
  return (
    <div className="relative flex h-full w-[97.050px] shrink-0 flex-col items-center">
      <div className="mt-[12px] flex h-[82px] items-center">{art}</div>
      {dot && <div className="mt-[12px] h-[8px] w-[8px] rounded-full bg-[#e5dede]/75" />}
      {badge && (
        <div className="absolute right-[3px] top-[8px] h-[34px] w-[34px] rounded-full bg-[#f23b30] text-center font-['Inter'] text-[19px] leading-[34px] text-white shadow-[0_1px_3px_rgba(0,0,0,0.5)]">{badge}</div>
      )}
    </div>
  );
}

function Dock() {
  return (
    <div className="absolute left-[80px] top-[1670px] flex h-[120px] w-[2720px] rounded-[38px] border-2 border-white/20 bg-[linear-gradient(90deg,#45352a_0%,#46362b_18%,#3f332c_28%,#24222b_36%,#202026_50%,#201f24_66%,#262638_82%,#282840_100%)] pl-[3.500px] shadow-[0_0_0_1px_rgba(0,0,0,0.5)]">
      {ICONS.map((i) => (
        <DockItem key={i.name} art={i.art} dot={i.dot} badge={i.badge} />
      ))}
      <div className="ml-[23px] mt-[14px] h-[88px] w-[2px] shrink-0 bg-white/35" />
      <div className="w-[20px] shrink-0" />
      {ICONS_RIGHT.map((i) => (
        <DockItem key={i.name} art={i.art} dot={i.dot} />
      ))}
      <div className="ml-[21px] mt-[14px] h-[88px] w-[2px] shrink-0 bg-white/35" />
      <div className="ml-[21px] flex w-[97px] shrink-0 flex-col items-center">
        <svg viewBox="0 0 76 75" className="mt-[15px] h-[75px] w-[76px]">
          <path d="M8 4q0-3 4-3h12q2 0 4 4h36q4 0 4 4v20H8z" fill="#3a9fd0" />
          <path d="M3 13q0-4 4-4h16q3 0 5 4h41q4 0 4 4v20H3z" fill="#48b4e4" />
          <path d="M1 19q0-4 4-4h18q3 0 6 5h42q4 0 4 4v40H1z" fill="#3fa9da" />
          <rect y="22" width="76" height="53" rx="5" fill="#5cc9fb" />
          <path d="M1 69h74" stroke="#46b1e2" strokeWidth="1.500" />
        </svg>
        <div className="mt-[16px] h-[8px] w-[90px] rounded-[4px] bg-[#a9a8bb]" />
      </div>
      <div className="flex w-[97px] shrink-0 justify-center">
        <svg viewBox="0 0 68 86" className="mt-[8px] h-[86px] w-[68px]">
          <defs>
            <linearGradient id="bin" x1="0" x2="1">
              <stop offset="0" stopColor="#9c9da0" />
              <stop offset=".3" stopColor="#5e6063" />
              <stop offset=".7" stopColor="#6f7174" />
              <stop offset="1" stopColor="#a5a6a9" />
            </linearGradient>
          </defs>
          <path d="M1 12q33 12 66 0l-8 64q-2 9-25 9T9 76z" fill="url(#bin)" />
          <ellipse cx="34" cy="13" rx="33" ry="8" fill="#77797c" />
          <path d="M8 12l4-8 10 3 3-5 8 5 8-4 8 3 6 4 6 6-8 4-10 3-12-3-14 2z" fill="#f1f1f1" />
          <path d="M16 8l6 8 6-6M40 6l5 10 8-4M26 14l4 6M50 9l4 6" stroke="#7a4a3a" strokeWidth="2" fill="none" />
          <path d="M25 8l5 3-4 3z" fill="#33b5a0" />
        </svg>
      </div>
    </div>
  );
}

export default function App() {
  return (
    <div className="relative h-[1800px] w-[2880px] overflow-hidden bg-[#0a0810] font-['Liberation_Sans',sans-serif]">
      <Wallpaper />
      <EditorWindow />
      <AppWindow />
      <Dock />
      <div className="relative">
        <MenuBar />
      </div>
    </div>
  );
}
